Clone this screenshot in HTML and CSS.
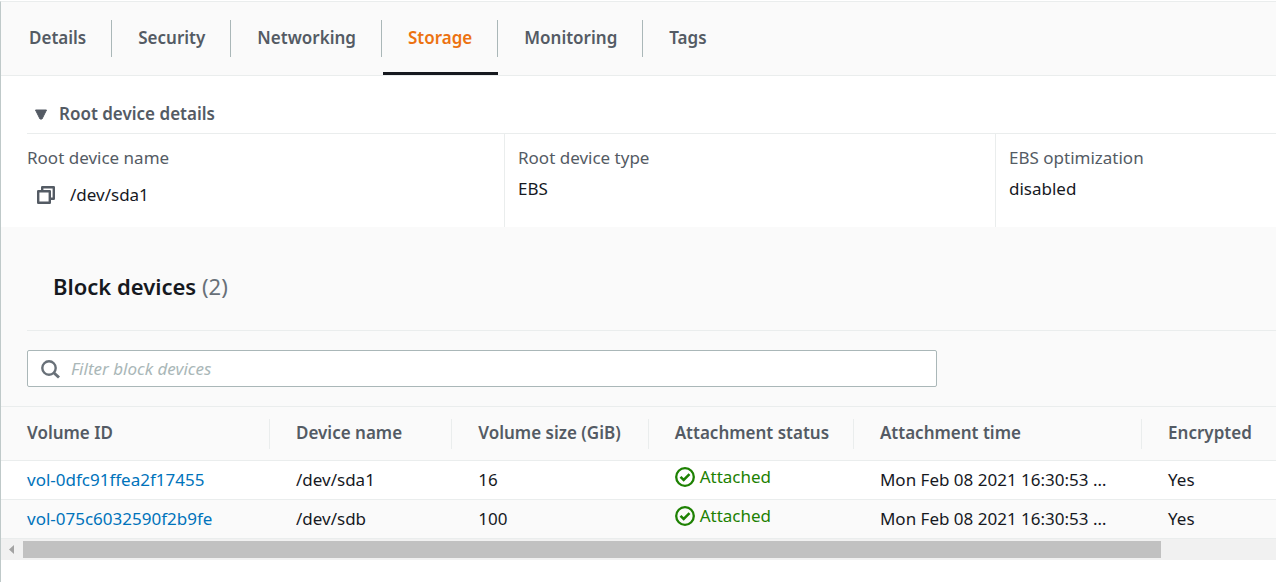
FILE: index.html
```html
<!DOCTYPE html>
<html lang="en">
<head>
  <meta charset="UTF-8">
  <title>Instance storage</title>
  <link rel="stylesheet" href="styles.css">
</head>
<body>
  <main class="panel">

    <nav class="tabs">
      <a class="tab" href="#details"><span>Details</span></a>
      <a class="tab" href="#security"><span>Security</span></a>
      <a class="tab" href="#networking"><span>Networking</span></a>
      <a class="tab active" href="#storage"><span>Storage</span></a>
      <a class="tab" href="#monitoring"><span>Monitoring</span></a>
      <a class="tab" href="#tags"><span>Tags</span></a>
    </nav>

    <!-- Root device -->
    <section class="root-device">
      <button class="expander" type="button" aria-expanded="true">
        <svg width="14" height="12" viewBox="0 0 14 12"><path d="M1.500 2h11L8 11H6z" fill="#545b64" stroke="#545b64" stroke-linejoin="round"/></svg>
        Root device details
      </button>
      <dl class="details">
        <div class="detail">
          <dt>Root device name</dt>
          <dd class="with-copy">
            <button class="copy" type="button" aria-label="Copy">
              <svg width="18" height="18" viewBox="0 0 18 18" fill="none" stroke="#545b64" stroke-width="2.400" stroke-linejoin="round"><path d="M1.200 5.200h11.600v11.600H1.200z"/><path d="M5.200 5V1.200h11.600v11.600H13"/></svg>
            </button>
            /dev/sda1
          </dd>
        </div>
        <div class="detail">
          <dt>Root device type</dt>
          <dd>EBS</dd>
        </div>
        <div class="detail">
          <dt>EBS optimization</dt>
          <dd>disabled</dd>
        </div>
      </dl>
    </section>

    <!-- Block devices -->
    <section class="block-devices">
      <h2>Block devices <span class="count">(2)</span></h2>
      <div class="filter">
        <label class="search">
          <svg width="20" height="20" viewBox="0 0 20 20" fill="none" stroke="#687078"><circle cx="8" cy="9" r="6.700" stroke-width="2.400"/><path d="M12.500 13.500l5.500 5" stroke-width="3"/></svg>
          <input type="text" placeholder="Filter block devices" aria-label="Filter block devices">
        </label>
      </div>
      <table>
        <colgroup>
          <col class="col-id"><col class="col-name"><col class="col-size"><col class="col-status"><col class="col-time"><col>
        </colgroup>
        <thead>
          <tr>
            <th><div>Volume ID</div></th>
            <th><div>Device name</div></th>
            <th><div>Volume size (GiB)</div></th>
            <th><div>Attachment status</div></th>
            <th><div>Attachment time</div></th>
            <th><div>Encrypted</div></th>
          </tr>
        </thead>
        <tbody>
          <tr>
            <td><a href="#vol-0dfc91ffea2f17455">vol-0dfc91ffea2f17455</a></td>
            <td>/dev/sda1</td>
            <td>16</td>
            <td><div class="status"><svg width="20" height="20" viewBox="0 0 20 20" fill="none" stroke="#1d8102"><circle cx="10" cy="10" r="8.800" stroke-width="2.300"/><path d="M5.500 9.800l3.200 3.200 5.800-5.800" stroke-width="2.500"/></svg>Attached</div></td>
            <td>Mon Feb 08 2021 16:30:53 …</td>
            <td>Yes</td>
          </tr>
          <tr>
            <td><a href="#vol-075c6032590f2b9fe">vol-075c6032590f2b9fe</a></td>
            <td>/dev/sdb</td>
            <td>100</td>
            <td><div class="status"><svg width="20" height="20" viewBox="0 0 20 20" fill="none" stroke="#1d8102"><circle cx="10" cy="10" r="8.800" stroke-width="2.300"/><path d="M5.500 9.800l3.200 3.200 5.800-5.800" stroke-width="2.500"/></svg>Attached</div></td>
            <td>Mon Feb 08 2021 16:30:53 …</td>
            <td>Yes</td>
          </tr>
        </tbody>
      </table>
      <div class="scrollbar">
        <svg width="22" height="17" viewBox="0 0 22 17"><path d="M13 4v9L8 8.500z" fill="#a3a3a3"/></svg>
        <div class="track"><div class="thumb"></div></div>
      </div>
    </section>

  </main>
</body>
</html>
```
FILE: styles.css
```css
* {
  box-sizing: border-box;
}
body {
  margin: 0;
  background: #fff;
  color: #16191f;
  font-family: "Noto Sans", "Open Sans", sans-serif;
  font-size: 17px;
  line-height: 24px;
  overflow-x: hidden;
}
.panel {
  min-height: 100vh;
  margin-top: 1px;
  border-top: 1px solid #eaeded;
  border-left: 1px solid #bfc9c9;
}
button {
  background: none;
  border: none;
  padding: 0;
  font: inherit;
  color: inherit;
  cursor: pointer;
}
svg {
  flex: none;
  display: block;
}
a {
  color: #0073bb;
  text-decoration: none;
}

/* tabs */
.tabs {
  display: flex;
  padding-left: 2px;
  background: #fafafa;
  border-bottom: 1px solid #eaeded;
}
.tab {
  padding: 18px 0 15px;
  margin-left: 1px;
  border-bottom: 3px solid transparent;
  color: #545b64;
  font-weight: 600;
}
.tab span {
  display: block;
  padding: 6px 25px 7px;
  border-right: 1px solid #aab7b8;
}
.tab:last-child span {
  border-right: none;
}
.tab.active {
  color: #ec7211;
  border-bottom-color: #16191f;
}

/* root device */
.root-device {
  padding: 26px 0 0 26px;
}
.expander {
  display: flex;
  align-items: center;
  gap: 11px;
  width: 100%;
  padding: 0 0 7px 7px;
  border-bottom: 1px solid #eaeded;
  color: #545b64;
  font-weight: 600;
}
.details {
  display: grid;
  grid-template-columns: 477fr 491fr 281fr;
  margin: 0;
}
.detail {
  min-height: 93px;
  padding-top: 12px;
}
.detail + .detail {
  padding-left: 13px;
  border-left: 1px solid #eaeded;
}
dt {
  color: #545b64;
}
dd {
  margin: 7px 0 0;
}
.with-copy {
  display: flex;
  align-items: center;
  gap: 15px;
  margin-top: 13px;
  padding-left: 10px;
}

/* block devices */
.block-devices {
  background: #fafafa;
}
h2 {
  margin: 0 0 0 26px;
  padding: 43px 26px 28px;
  border-bottom: 1px solid #eaeded;
  font-size: 22px;
  font-weight: 600;
  line-height: 32px;
}
.count {
  color: #687078;
  font-weight: 400;
}
.filter {
  padding: 19px 26px;
}
.search {
  display: flex;
  align-items: center;
  gap: 10px;
  width: 74.4%;
  height: 37px;
  padding: 0 13px;
  background: #fff;
  border: 1px solid #aab7b8;
  border-radius: 2px;
}
.search input {
  flex: 1;
  padding: 0;
  border: none;
  outline: none;
  background: none;
  font: inherit;
}
.search input::placeholder {
  color: #aab7b8;
  font-style: italic;
}

table {
  width: 100%;
  table-layout: fixed;
  border-collapse: separate;
  border-spacing: 0;
  border-top: 1px solid #eaeded;
}
.col-id { width: 21.1%; }
.col-name { width: 14.3%; }
.col-size { width: 15.4%; }
.col-status { width: 16.1%; }
.col-time { width: 22.6%; }
th, td {
  padding: 0 0 0 26px;
  border-bottom: 1px solid #eaeded;
  text-align: left;
  white-space: nowrap;
}
th {
  height: 54px;
  color: #545b64;
  font-weight: 600;
}
th div {
  padding: 2px 0 4px;
  border-right: 1px solid #eaeded;
}
th:last-child div {
  border-right: none;
}
td {
  height: 39px;
  background: #fff;
}
tr:nth-child(even) td {
  background: #fafafa;
}
.status {
  display: flex;
  align-items: center;
  gap: 5px;
  padding-bottom: 6px;
  color: #1d8102;
}

.scrollbar {
  display: flex;
  padding: 2px 0;
  background: #f1f1f1;
}
.track {
  flex: 1;
}
.thumb {
  width: 90.8%;
  height: 17px;
  background: #c1c1c1;
}
```
